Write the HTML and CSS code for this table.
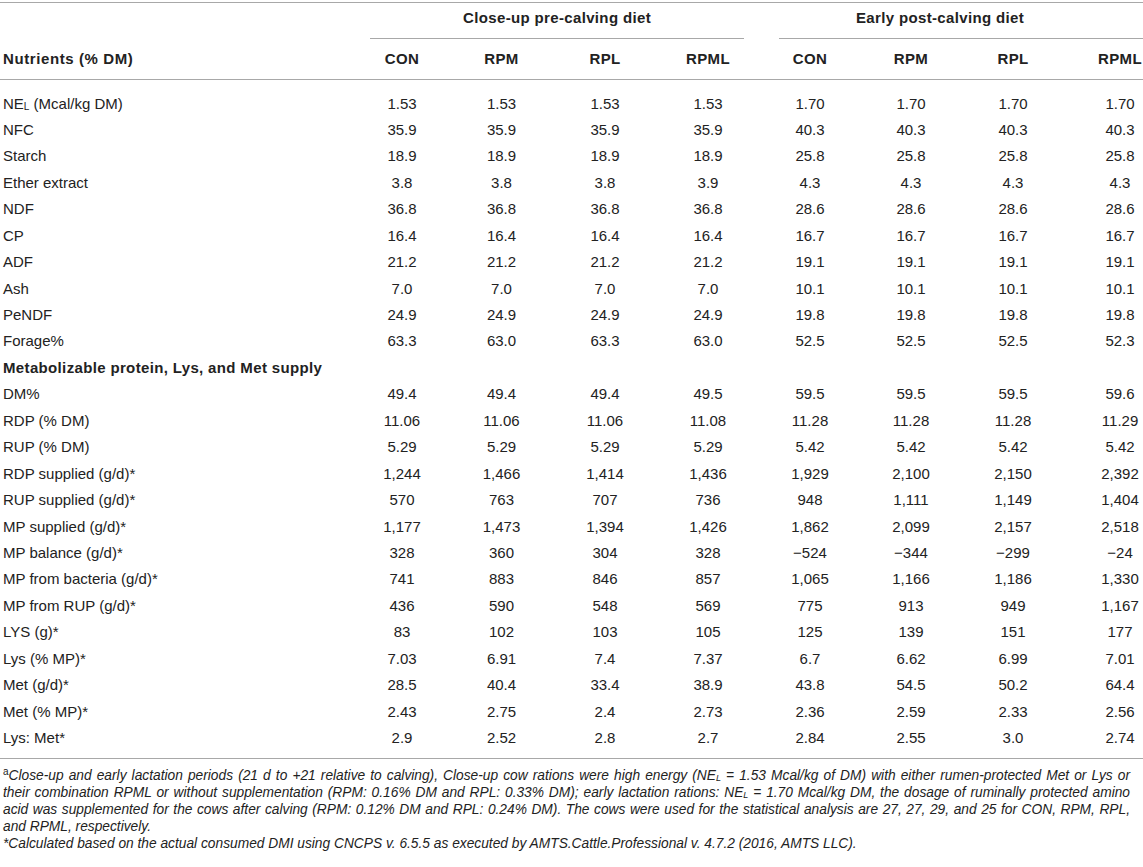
FILE: index.html
```html
<!DOCTYPE html>
<html lang="en">
<head>
    <meta charset="UTF-8">
    <meta name="viewport" content="width=device-width, initial-scale=1.0">
    <title>Diet composition</title>
    <link rel="stylesheet" href="styles.css">
</head>
<body>
    <div class="table-wrap">
        <table class="diet-table">
            <colgroup>
                <col class="col-name">
                <col style="width: 96px">
                <col style="width: 103px">
                <col style="width: 104px">
                <col style="width: 102px">
                <col style="width: 102px">
                <col style="width: 100px">
                <col style="width: 104px">
                <col style="width: 110px">
            </colgroup>
            <thead>
                <tr class="group-row">
                    <th></th>
                    <th colspan="4"><div class="group pre">Close-up pre-calving diet</div></th>
                    <th colspan="4"><div class="group post">Early post-calving diet</div></th>
                </tr>
                <tr class="head-row">
                    <th class="name">Nutrients (% DM)</th>
                    <th>CON</th>
                    <th>RPM</th>
                    <th>RPL</th>
                    <th>RPML</th>
                    <th>CON</th>
                    <th>RPM</th>
                    <th>RPL</th>
                    <th>RPML</th>
                </tr>
            </thead>
            <tbody>
                <tr class="first"><td class="name">NE<sub>L</sub> (Mcal/kg DM)</td><td>1.53</td><td>1.53</td><td>1.53</td><td>1.53</td><td>1.70</td><td>1.70</td><td>1.70</td><td>1.70</td></tr>
                <tr><td class="name">NFC</td><td>35.9</td><td>35.9</td><td>35.9</td><td>35.9</td><td>40.3</td><td>40.3</td><td>40.3</td><td>40.3</td></tr>
                <tr><td class="name">Starch</td><td>18.9</td><td>18.9</td><td>18.9</td><td>18.9</td><td>25.8</td><td>25.8</td><td>25.8</td><td>25.8</td></tr>
                <tr><td class="name">Ether extract</td><td>3.8</td><td>3.8</td><td>3.8</td><td>3.9</td><td>4.3</td><td>4.3</td><td>4.3</td><td>4.3</td></tr>
                <tr><td class="name">NDF</td><td>36.8</td><td>36.8</td><td>36.8</td><td>36.8</td><td>28.6</td><td>28.6</td><td>28.6</td><td>28.6</td></tr>
                <tr><td class="name">CP</td><td>16.4</td><td>16.4</td><td>16.4</td><td>16.4</td><td>16.7</td><td>16.7</td><td>16.7</td><td>16.7</td></tr>
                <tr><td class="name">ADF</td><td>21.2</td><td>21.2</td><td>21.2</td><td>21.2</td><td>19.1</td><td>19.1</td><td>19.1</td><td>19.1</td></tr>
                <tr><td class="name">Ash</td><td>7.0</td><td>7.0</td><td>7.0</td><td>7.0</td><td>10.1</td><td>10.1</td><td>10.1</td><td>10.1</td></tr>
                <tr><td class="name">PeNDF</td><td>24.9</td><td>24.9</td><td>24.9</td><td>24.9</td><td>19.8</td><td>19.8</td><td>19.8</td><td>19.8</td></tr>
                <tr><td class="name">Forage%</td><td>63.3</td><td>63.0</td><td>63.3</td><td>63.0</td><td>52.5</td><td>52.5</td><td>52.5</td><td>52.3</td></tr>
                <tr><td class="name section" colspan="9">Metabolizable protein, Lys, and Met supply</td></tr>
                <tr><td class="name">DM%</td><td>49.4</td><td>49.4</td><td>49.4</td><td>49.5</td><td>59.5</td><td>59.5</td><td>59.5</td><td>59.6</td></tr>
                <tr><td class="name">RDP (% DM)</td><td>11.06</td><td>11.06</td><td>11.06</td><td>11.08</td><td>11.28</td><td>11.28</td><td>11.28</td><td>11.29</td></tr>
                <tr><td class="name">RUP (% DM)</td><td>5.29</td><td>5.29</td><td>5.29</td><td>5.29</td><td>5.42</td><td>5.42</td><td>5.42</td><td>5.42</td></tr>
                <tr><td class="name">RDP supplied (g/d)*</td><td>1,244</td><td>1,466</td><td>1,414</td><td>1,436</td><td>1,929</td><td>2,100</td><td>2,150</td><td>2,392</td></tr>
                <tr><td class="name">RUP supplied (g/d)*</td><td>570</td><td>763</td><td>707</td><td>736</td><td>948</td><td>1,111</td><td>1,149</td><td>1,404</td></tr>
                <tr><td class="name">MP supplied (g/d)*</td><td>1,177</td><td>1,473</td><td>1,394</td><td>1,426</td><td>1,862</td><td>2,099</td><td>2,157</td><td>2,518</td></tr>
                <tr><td class="name">MP balance (g/d)*</td><td>328</td><td>360</td><td>304</td><td>328</td><td>&minus;524</td><td>&minus;344</td><td>&minus;299</td><td>&minus;24</td></tr>
                <tr><td class="name">MP from bacteria (g/d)*</td><td>741</td><td>883</td><td>846</td><td>857</td><td>1,065</td><td>1,166</td><td>1,186</td><td>1,330</td></tr>
                <tr><td class="name">MP from RUP (g/d)*</td><td>436</td><td>590</td><td>548</td><td>569</td><td>775</td><td>913</td><td>949</td><td>1,167</td></tr>
                <tr><td class="name">LYS (g)*</td><td>83</td><td>102</td><td>103</td><td>105</td><td>125</td><td>139</td><td>151</td><td>177</td></tr>
                <tr><td class="name">Lys (% MP)*</td><td>7.03</td><td>6.91</td><td>7.4</td><td>7.37</td><td>6.7</td><td>6.62</td><td>6.99</td><td>7.01</td></tr>
                <tr><td class="name">Met (g/d)*</td><td>28.5</td><td>40.4</td><td>33.4</td><td>38.9</td><td>43.8</td><td>54.5</td><td>50.2</td><td>64.4</td></tr>
                <tr><td class="name">Met (% MP)*</td><td>2.43</td><td>2.75</td><td>2.4</td><td>2.73</td><td>2.36</td><td>2.59</td><td>2.33</td><td>2.56</td></tr>
                <tr class="last"><td class="name">Lys: Met*</td><td>2.9</td><td>2.52</td><td>2.8</td><td>2.7</td><td>2.84</td><td>2.55</td><td>3.0</td><td>2.74</td></tr>
            </tbody>
        </table>
    </div>
    <div class="notes">
        <p>
            <span class="line"><sup>a</sup>Close-up and early lactation periods (21 d to +21 relative to calving), Close-up cow rations were high energy (NE<sub>L</sub> = 1.53 Mcal/kg of DM) with either rumen-protected Met or Lys or</span>
            <span class="line">their combination RPML or without supplementation (RPM: 0.16% DM and RPL: 0.33% DM); early lactation rations: NE<sub>L</sub> = 1.70 Mcal/kg DM, the dosage of ruminally protected amino</span>
            <span class="line">acid was supplemented for the cows after calving (RPM: 0.12% DM and RPL: 0.24% DM). The cows were used for the statistical analysis are 27, 27, 29, and 25 for CON, RPM, RPL,</span>
            <span class="line end">and RPML, respectively.</span>
        </p>
        <p>*Calculated based on the actual consumed DMI using CNCPS v. 6.5.5 as executed by AMTS.Cattle.Professional v. 4.7.2 (2016, AMTS LLC).</p>
    </div>
</body>
</html>
```

FILE: styles.css
```css
body {
    margin: 0;
    padding: 0;
    background-color: #fff;
    color: #222;
    font-family: "Liberation Sans", Arial, sans-serif;
    overflow: hidden;
}
.table-wrap {
    width: 100%;
    overflow: hidden;
    padding-top: 2px;
}
.diet-table {
    width: 1175px;
    table-layout: fixed;
    border-collapse: collapse;
    border-top: 1px solid #a8a8a8;
    border-bottom: 1px solid #a8a8a8;
    font-size: 15px;
    line-height: 17px;
}
.col-name {
    width: 354px;
}
th,
td {
    padding: 0;
    text-align: center;
    white-space: nowrap;
}
th {
    font-weight: bold;
    letter-spacing: 0.35px;
}
.group-row th {
    padding: 6px 0 0;
    vertical-align: bottom;
}
.group {
    padding-bottom: 12px;
    border-bottom: 1px solid #a8a8a8;
}
.group.pre {
    margin: 0 15px 0 16px;
}
.group.post {
    margin-left: 20px;
    padding-right: 74px;
}
.head-row th {
    padding: 11px 0 12px;
    border-bottom: 1px solid #a8a8a8;
}
.name {
    text-align: left;
    padding-left: 3px;
}
th.name {
    padding-left: 3px;
    letter-spacing: 0.6px;
}
td {
    padding-top: 4.73px;
    padding-bottom: 4.73px;
}
td.name {
    padding-left: 3px;
}
.section {
    font-weight: bold;
    letter-spacing: 0.35px;
}
tr.first td {
    padding-top: 14.5px;
}
tr.last td {
    padding-bottom: 12px;
}
sub {
    font-size: 10px;
    vertical-align: -1px;
    line-height: 0;
}
.notes {
    padding: 8px 13px 0 3px;
    font-size: 13.75px;
    line-height: 17px;
    font-style: italic;
}
.notes p {
    margin: 0;
}
.notes .line {
    display: block;
    white-space: nowrap;
    text-align: justify;
    text-align-last: justify;
}
.notes .line.end {
    text-align-last: left;
}
.notes sup {
    font-style: normal;
    font-size: 10px;
    line-height: 0;
    vertical-align: 5px;
}
.notes sub {
    font-size: 9px;
    vertical-align: -1px;
}
```
